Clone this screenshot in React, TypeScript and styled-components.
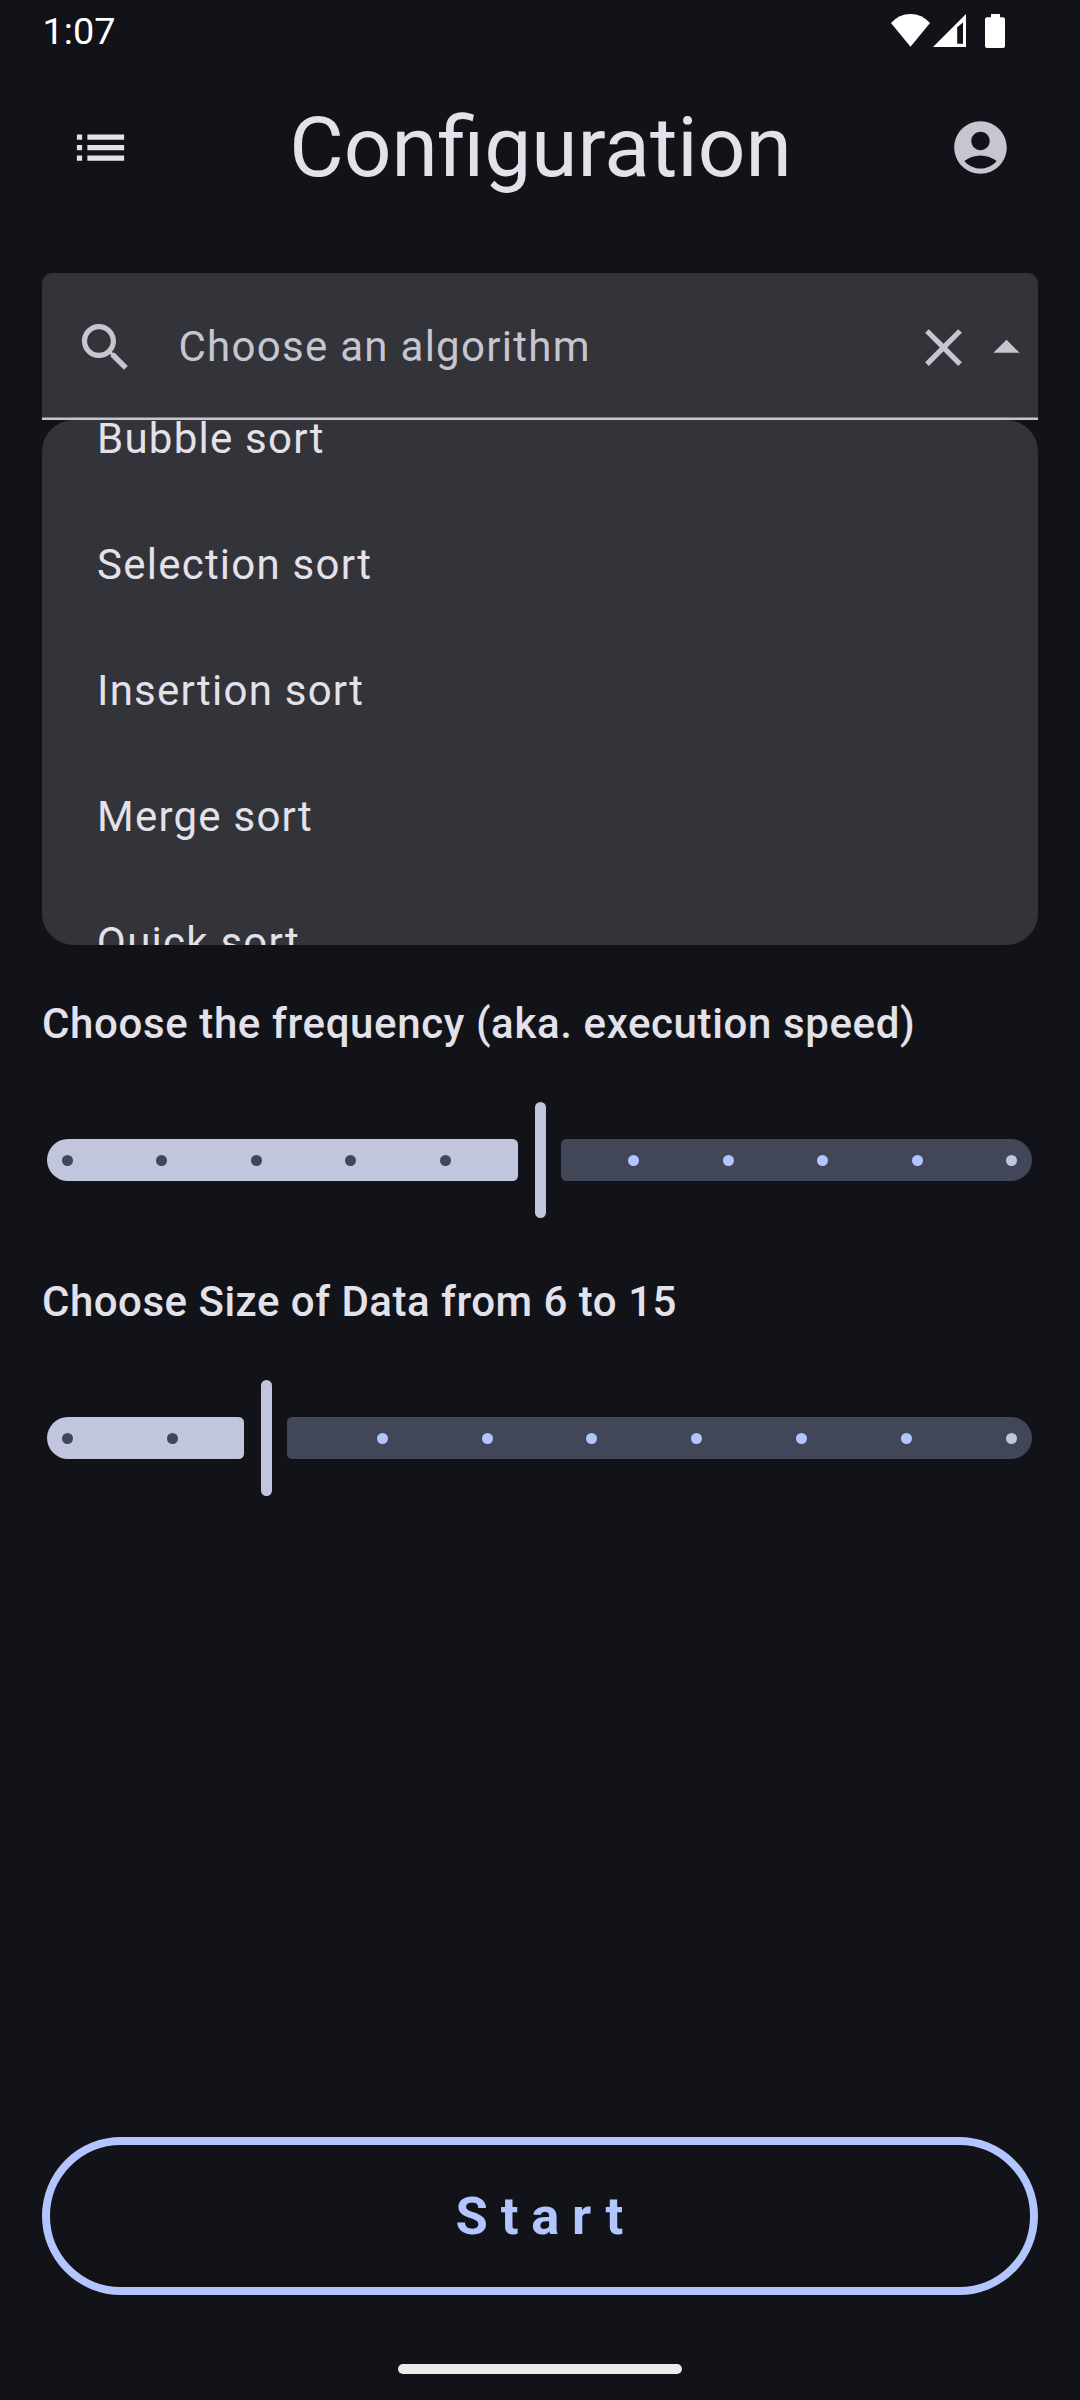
import React from "react";
import styled, { createGlobalStyle } from "styled-components";

const color = {
  background: "#121318",
  surface: "#333439",
  text: "#e3e1e9",
  muted: "#c6c5d0",
  primary: "#b3c5ff",
  secondary: "#c1c5dd",
  track: "#424659",
};

const GlobalStyle = createGlobalStyle`
  *, *::before, *::after { box-sizing: border-box; }
  body { margin: 0; background: ${color.background}; }
`;

const Screen = styled.div`
  display: flex;
  flex-direction: column;
  width: 1080px;
  height: 2400px;
  overflow: hidden;
  background: ${color.background};
  color: ${color.text};
  font-family: Roboto, "Noto Sans", sans-serif;
`;

const StatusBar = styled.header`
  display: flex;
  align-items: flex-start;
  justify-content: space-between;
  height: 63px;
  padding: 0 74px 0 42.5px;
`;

const Clock = styled.span`
  padding-top: 10px;
  font-size: 37.8px;
  line-height: 43px;
  color: #fff;
`;

const StatusIcons = styled.svg`
  display: block;
  width: 116px;
  height: 50px;
`;

const AppBar = styled.div`
  display: flex;
  align-items: center;
  justify-content: space-between;
  height: 168px;
  padding: 1px 68px 0 69px;
`;

const Title = styled.h1`
  margin: 0 0 1px;
  font-size: 83.8px;
  font-weight: 400;
  line-height: 98px;
`;

const IconButton = styled.button<{ $tone?: string }>`
  display: flex;
  flex: none;
  width: 63px;
  height: 63px;
  padding: 0;
  border: 0;
  background: none;
  color: ${(p) => p.$tone ?? color.muted};
`;

const Glyph = styled.svg`
  display: block;
  width: 63px;
  height: 63px;
  fill: currentColor;
`;

const Content = styled.main`
  display: flex;
  flex: 1;
  flex-direction: column;
  padding: 42px 42px 0;
`;

const SearchField = styled.div`
  display: flex;
  align-items: flex-start;
  height: 147px;
  padding: 43px 0 0 31.5px;
  border-radius: 10.5px 10.5px 0 0;
  background: ${color.surface};
  box-shadow: inset 0 -2.6px 0 ${color.muted};
  color: ${color.muted};
`;

const Placeholder = styled.span`
  flex: 1;
  margin-top: -1px;
  padding-left: 42px;
  font-size: 42px;
  line-height: 63px;
  letter-spacing: 1.28px;
`;

const Menu = styled.ul`
  height: 525px;
  margin: 0;
  padding: 0;
  overflow: hidden;
  border-radius: 31.5px;
  background: ${color.surface};
  list-style: none;
`;

const MenuItem = styled.li`
  display: flex;
  align-items: center;
  height: 126px;
  padding: 0 55px;
  font-size: 42px;
  line-height: 63px;
  letter-spacing: 1.24px;

  &:first-child {
    margin-top: -45px;
  }
`;

const Section = styled.section`
  display: flex;
  flex-direction: column;
  height: 278px;

  &:first-of-type {
    margin-top: 47px;
  }
`;

const Label = styled.h2<{ $tracking: number }>`
  margin: 0;
  font-size: 42px;
  font-weight: 500;
  line-height: 63px;
  letter-spacing: ${(p) => p.$tracking}px;
  white-space: nowrap;
`;

const Slider = styled.div`
  display: grid;
  align-items: center;
  height: 116px;
  margin: 47px 6px 0 5px;

  & > * {
    grid-area: 1 / 1;
  }
`;

const Rail = styled.div`
  display: flex;
  align-items: center;
`;

const ActiveTrack = styled.div`
  height: 42px;
  border-radius: 21px 5.25px 5.25px 21px;
  background: ${color.secondary};
`;

const Thumb = styled.div`
  flex: none;
  width: 11px;
  height: 116px;
  margin: 0 15px 0 17px;
  border-radius: 5.5px;
  background: ${color.secondary};
`;

const InactiveTrack = styled.div`
  flex: 1;
  height: 42px;
  border-radius: 5.25px 21px 21px 5.25px;
  background: ${color.track};
`;

const Ticks = styled.div`
  display: flex;
  justify-content: space-between;
  padding: 0 15px;
`;

const Tick = styled.span<{ $fill: string }>`
  width: 11px;
  height: 11px;
  border-radius: 50%;
  background: ${(p) => p.$fill};
`;

const StartButton = styled.button`
  height: 158px;
  margin: auto 0 0;
  padding: 0 0 0 11.5px;
  border: 8px solid ${color.primary};
  border-radius: 79px;
  background: none;
  color: ${color.primary};
  font: 700 52.5px/62px Roboto, "Noto Sans", sans-serif;
  letter-spacing: 12.8px;
`;

const GestureBar = styled.footer`
  display: flex;
  justify-content: center;
  height: 105px;
  padding-top: 69px;
`;

const Pill = styled.div`
  width: 284px;
  height: 10px;
  border-radius: 5px;
  background: #ececec;
`;

const icons = {
  list: "M3 13h2v-2H3v2zm0 4h2v-2H3v2zm0-8h2V7H3v2zm4 4h14v-2H7v2zm0 4h14v-2H7v2zM7 7v2h14V7H7z",
  account:
    "M12 2C6.48 2 2 6.48 2 12s4.48 10 10 10 10-4.48 10-10S17.52 2 12 2zm0 4c1.93 0 3.5 1.57 3.5 3.5S13.93 13 12 13s-3.5-1.57-3.5-3.5S10.07 6 12 6zm0 14c-2.03 0-4.43-.82-6.14-2.88C7.55 15.8 9.68 15 12 15s4.45.8 6.14 2.12C16.43 19.18 14.03 20 12 20z",
  search:
    "M15.5 14h-.79l-.28-.27C15.41 12.59 16 11.11 16 9.5 16 5.91 13.09 3 9.5 3S3 5.91 3 9.5 5.91 16 9.5 16c1.61 0 3.09-.59 4.23-1.57l.27.28v.79l5 4.99L20.49 19l-4.99-5zm-6 0C7.01 14 5 11.99 5 9.5S7.01 5 9.5 5 14 7.01 14 9.5 11.99 14 9.5 14z",
  close:
    "M19 6.41L17.59 5 12 10.59 6.41 5 5 6.41 10.59 12 5 17.59 6.41 19 12 13.41 17.59 19 19 17.59 13.41 12z",
  arrowUp: "M7 14l5-5 5 5z",
};

function Icon({ name }: { name: keyof typeof icons }) {
  return (
    <Glyph viewBox="0 0 24 24" aria-hidden="true">
      <path d={icons[name]} />
    </Glyph>
  );
}

const TRACK_WIDTH = 985;
const THUMB_CLEARANCE = 21.5;

function StepSlider({ steps, value }: { steps: number; value: number }) {
  const active = Math.floor((value / steps) * TRACK_WIDTH - THUMB_CLEARANCE);
  const fillOf = (i: number) => {
    if (i === value) return "transparent";
    if (i < value) return color.track;
    return i === steps ? color.secondary : color.primary;
  };
  return (
    <Slider>
      <Rail>
        <ActiveTrack style={{ width: active }} />
        <Thumb />
        <InactiveTrack />
      </Rail>
      <Ticks>
        {Array.from({ length: steps + 1 }, (_, i) => (
          <Tick key={i} $fill={fillOf(i)} />
        ))}
      </Ticks>
    </Slider>
  );
}

const algorithms = ["Bubble sort", "Selection sort", "Insertion sort", "Merge sort", "Quick sort"];

export default function App() {
  return (
    <Screen>
      <GlobalStyle />
      <StatusBar>
        <Clock>1:07</Clock>
        <StatusIcons viewBox="890 0 116 50" fill="#fff" aria-hidden="true">
          <path d="M891 23Q899 14 910.5 14T930 23L910.5 46.7Z" />
          <path fillRule="evenodd" d="M933 47L966 14V47ZM957.2 27.2V43.7H963V22.4Z" />
          <path d="M991 14h9v3.2h3a2 2 0 0 1 2 2V46a2 2 0 0 1-2 2h-16a2 2 0 0 1-2-2V19.200a2 2 0 0 1 2-2h4z" />
        </StatusIcons>
      </StatusBar>
      <AppBar>
        <IconButton $tone={color.text} aria-label="Menu">
          <Icon name="list" />
        </IconButton>
        <Title>Configuration</Title>
        <IconButton aria-label="Account">
          <Icon name="account" />
        </IconButton>
      </AppBar>
      <Content>
        <SearchField>
          <Icon name="search" />
          <Placeholder>Choose an algorithm</Placeholder>
          <IconButton aria-label="Clear">
            <Icon name="close" />
          </IconButton>
          <IconButton aria-label="Collapse">
            <Icon name="arrowUp" />
          </IconButton>
        </SearchField>
        <Menu>
          {algorithms.map((name) => (
            <MenuItem key={name}>{name}</MenuItem>
          ))}
        </Menu>
        <Section>
          <Label $tracking={0.62}>Choose the frequency (aka. execution speed)</Label>
          <StepSlider steps={10} value={5} />
        </Section>
        <Section>
          <Label $tracking={0.5}>Choose Size of Data from 6 to 15</Label>
          <StepSlider steps={9} value={2} />
        </Section>
        <StartButton>Start</StartButton>
      </Content>
      <GestureBar>
        <Pill />
      </GestureBar>
    </Screen>
  );
}
